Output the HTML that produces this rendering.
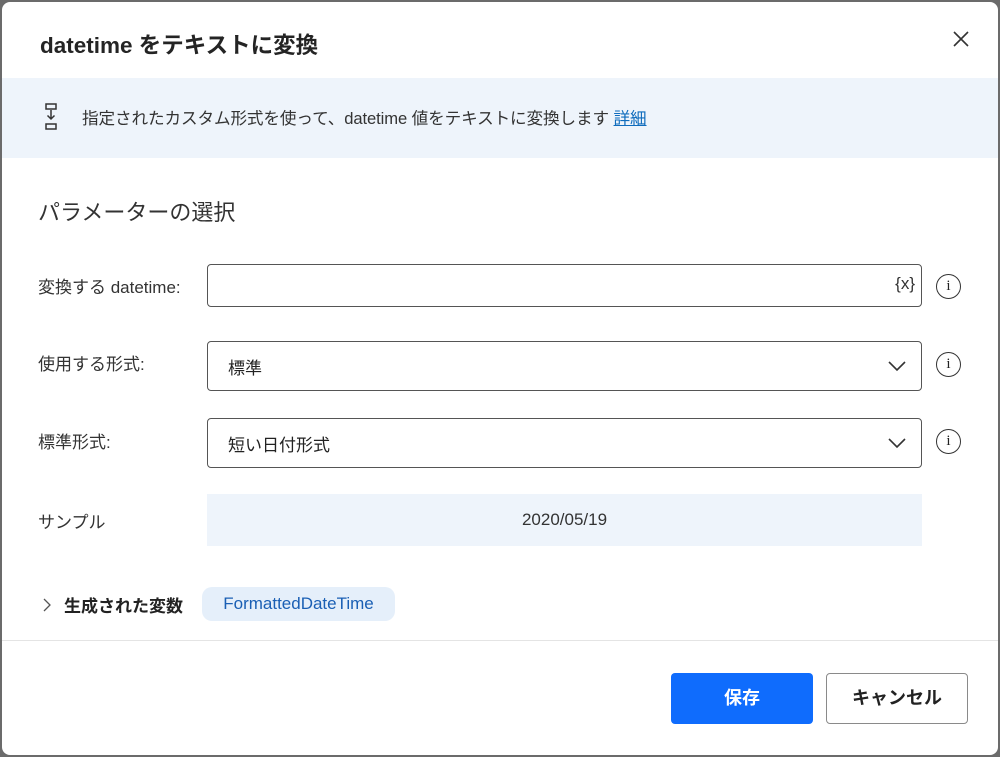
<!DOCTYPE html>
<html><head><meta charset="utf-8"><style>
*{box-sizing:border-box;margin:0;padding:0}
body{width:1000px;height:757px;background:#6b6b6b;font-family:"Liberation Sans","Noto Sans CJK JP",sans-serif;color:#222;position:relative;overflow:hidden}
.dlg{position:absolute;left:2px;top:2px;width:996px;height:753px;background:#fff;border-radius:8px;overflow:hidden}
.abs{position:absolute}
.title{left:38px;top:26px;font-size:22.5px;font-weight:bold;color:#242424}
.info{left:0;top:76px;width:996px;height:80px;background:#eef4fb}
.lbl{font-size:17px;color:#333}
.box{position:absolute;left:205px;width:715px;border:1.5px solid #555;border-radius:4px;background:#fff}
.circ{position:absolute;left:934px;width:25px;height:25px;border:1.6px solid #333;border-radius:50%;font-size:15px;text-align:center;line-height:22px;font-family:"Liberation Serif",serif}
.chev{position:absolute;right:14px;top:14px}
</style></head><body>
<div class="dlg">
<div class="abs title">datetime をテキストに変換</div>
<svg class="abs" style="left:951px;top:29px" width="16" height="16" viewBox="0 0 16 16"><path d="M1 1L15 15M15 1L1 15" stroke="#333" stroke-width="1.6"/></svg>
<div class="abs info"></div>
<svg class="abs" style="left:42px;top:101px" width="14" height="28" viewBox="0 0 14 28"><rect x="2" y="1" width="10" height="5" fill="none" stroke="#333" stroke-width="1.5"/><path d="M7 7V16M3.5 12.5L7 16L10.5 12.5" fill="none" stroke="#333" stroke-width="1.5"/><rect x="2" y="21" width="10" height="5" fill="none" stroke="#333" stroke-width="1.5"/></svg>
<div class="abs lbl" style="left:80px;top:103px;font-size:16.6px;letter-spacing:-0.1px">指定されたカスタム形式を使って、datetime 値をテキストに変換します <span style="color:#0f6cbd;text-decoration:underline">詳細</span></div>
<div class="abs" style="left:36px;top:193px;font-size:22px;color:#333">パラメーターの選択</div>

<div class="abs lbl" style="left:36px;top:271px">変換する datetime:</div>
<div class="box" style="top:262px;height:43px"><span style="position:absolute;right:6px;top:9px;font-size:17px;color:#333">{x}</span></div>
<div class="circ" style="top:272px">i</div>

<div class="abs lbl" style="left:36px;top:348px">使用する形式:</div>
<div class="box" style="top:339px;height:50px"><span style="position:absolute;left:20px;top:12px;font-size:17px">標準</span><svg class="chev" width="20" height="20" viewBox="0 0 20 20"><path d="M2 6L10 14L18 6" fill="none" stroke="#333" stroke-width="1.6"/></svg></div>
<div class="circ" style="top:350px">i</div>

<div class="abs lbl" style="left:36px;top:426px">標準形式:</div>
<div class="box" style="top:416px;height:50px"><span style="position:absolute;left:20px;top:12px;font-size:17px">短い日付形式</span><svg class="chev" width="20" height="20" viewBox="0 0 20 20"><path d="M2 6L10 14L18 6" fill="none" stroke="#333" stroke-width="1.6"/></svg></div>
<div class="circ" style="top:427px">i</div>

<div class="abs lbl" style="left:36px;top:506px">サンプル</div>
<div class="abs" style="left:205px;top:492px;width:715px;height:52px;background:#eef4fb;text-align:center;line-height:52px;font-size:17px;color:#333">2020/05/19</div>

<svg class="abs" style="left:40px;top:595px" width="10" height="16" viewBox="0 0 10 16"><path d="M2 2L8 8L2 14" fill="none" stroke="#555" stroke-width="1.3"/></svg>
<div class="abs" style="left:62px;top:590px;font-size:17px;font-weight:bold;color:#222">生成された変数</div>
<div class="abs" style="left:200px;top:585px;width:193px;height:34px;background:#e5effa;border-radius:10px;color:#1a5fb4;font-size:17px;text-align:center;line-height:34px">FormattedDateTime</div>

<div class="abs" style="left:0;top:638px;width:996px;height:1px;background:#e4e4e4"></div>
<div class="abs" style="left:669px;top:671px;width:142px;height:51px;background:#0f6cfd;border-radius:4px;color:#fff;font-size:18px;font-weight:bold;text-align:center;line-height:51px">保存</div>
<div class="abs" style="left:824px;top:671px;width:142px;height:51px;border:1px solid #8a8a8a;border-radius:4px;color:#222;font-size:18px;font-weight:bold;text-align:center;line-height:49px">キャンセル</div>
</div>
</body></html>
